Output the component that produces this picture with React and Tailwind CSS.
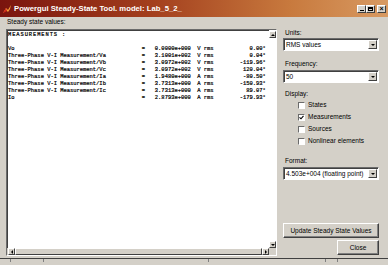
import React from 'react';

const rows = [
  ['Vo', '0.0000e+000', 'V', '0.00'],
  ['Three-Phase V-I Measurement/Va', '3.1001e+002', 'V', '0.04'],
  ['Three-Phase V-I Measurement/Vb', '3.0972e+002', 'V', '-119.96'],
  ['Three-Phase V-I Measurement/Vc', '3.0972e+002', 'V', '120.04'],
  ['Three-Phase V-I Measurement/Ia', '1.9480e+000', 'A', '-80.50'],
  ['Three-Phase V-I Measurement/Ib', '3.7313e+000', 'A', '-150.93'],
  ['Three-Phase V-I Measurement/Ic', '3.7313e+000', 'A', '89.07'],
  ['Io', '2.8793e+000', 'A', '-179.93'],
];

const fmt = ([l, v, u, a]) => l.padEnd(41) + '=   ' + v + '  ' + u + ' rms' + (a + '\u00b0').padStart(16);

function Arrow({ dir = 'down' }) {
  const pts = {
    down: '0,0 4,0 2,2',
    up: '0,2 4,2 2,0',
    left: '2,0 2,4 0,2',
    right: '0,0 0,4 2,2',
  }[dir];
  const vb = dir === 'left' || dir === 'right' ? '0 0 2 4' : '0 0 4 2';
  const cls = dir === 'left' || dir === 'right' ? 'w-[2px] h-[4px]' : 'w-[4px] h-[2px]';
  return (
    <svg viewBox={vb} className={cls}>
      <polygon points={pts} fill="#000" />
    </svg>
  );
}

function SmallBtn({ dir, className = '' }) {
  return (
    <div className={`flex items-center justify-center bg-[#d4d0c8] border border-t-white border-l-white border-r-[#404040] border-b-[#404040] ${className}`}>
      <Arrow dir={dir} />
    </div>
  );
}

function Select({ value }) {
  return (
    <div className="h-[13px] flex bg-white border border-t-[#6b6b6b] border-l-[#6b6b6b] border-r-white border-b-white shadow-[inset_1px_1px_0_#404040]">
      <div className="flex-1 pl-[2px] pt-[1px] text-[6.5px] leading-[10px] text-black truncate">{value}</div>
      <SmallBtn dir="down" className="w-[9px] my-[1px] mr-[1px]" />
    </div>
  );
}

function Check({ label, checked }) {
  return (
    <div className="h-[12px] flex items-center pl-[15px] gap-[3px]">
      <div className="w-[7px] h-[7px] bg-white border border-t-[#6b6b6b] border-l-[#6b6b6b] border-r-white border-b-white flex items-center justify-center">
        {checked && (
          <svg viewBox="0 0 5 5" className="w-[5px] h-[5px]">
            <polyline points="0.5,2.3 2,3.8 4.5,0.8" fill="none" stroke="#000" strokeWidth="1.1" />
          </svg>
        )}
      </div>
      <span className="text-[6.5px] leading-[8px] text-black">{label}</span>
    </div>
  );
}

function Button({ children, className = '' }) {
  return (
    <div className={`h-[15px] flex items-center justify-center bg-[#d4d0c8] border border-t-white border-l-white border-r-[#404040] border-b-[#404040] shadow-[inset_-1px_-1px_0_#808080] text-[6.5px] text-black ${className}`}>
      {children}
    </div>
  );
}

export default function App() {
  return (
    <div className="w-[388px] h-[265px] bg-[#d4d0c8] flex flex-col overflow-hidden font-['Liberation_Sans',Arial,sans-serif]">
      {/* title bar */}
      <div className="h-[17px] flex items-center bg-[linear-gradient(90deg,#7a140e_0%,#a4401e_40%,#c87a3e_75%,#d89a62_100%)] pl-[3px] pr-[2px]">
        <svg viewBox="0 0 8 8" className="w-[8px] h-[8px]">
          <polygon points="0,8 3,3 5,5 8,0 7,4 5,7 3,5" fill="#f6a23a" />
          <polygon points="0,8 3,3 4,6" fill="#d2281c" />
        </svg>
        <span className="ml-[3px] text-white font-bold text-[7.7px] leading-[9px] whitespace-nowrap">Powergui Steady-State Tool. model: Lab_5_2_</span>
        <div className="flex-1" />
        <div className="flex items-center">
          <div className="w-[9px] h-[8px] bg-[#d4d0c8] border border-t-white border-l-white border-r-[#404040] border-b-[#404040] flex items-end justify-center pb-[1px]">
            <div className="w-[4px] h-[1px] bg-black" />
          </div>
          <div className="w-[9px] h-[8px] bg-[#d4d0c8] border border-t-white border-l-white border-r-[#404040] border-b-[#404040] flex items-center justify-center">
            <div className="w-[5px] h-[4px] border border-black border-t-2" />
          </div>
          <div className="ml-[2px] w-[9px] h-[8px] bg-[#d4d0c8] border border-t-white border-l-white border-r-[#404040] border-b-[#404040] flex items-center justify-center text-[7px] leading-[6px] font-bold text-black">
            ×
          </div>
        </div>
      </div>

      {/* body */}
      <div className="flex-1 flex">
        {/* left */}
        <div className="ml-[6px] w-[271px] flex flex-col pb-[2px]">
          <div className="h-[12px] pt-[1px] pl-[1px] text-[6.5px] leading-[8px] text-black">Steady state values:</div>
          <div className="flex-1 flex flex-col border border-t-[#6b6b6b] border-l-[#6b6b6b] border-r-white border-b-white shadow-[inset_1px_1px_0_#404040] bg-white">
            <div className="flex-1 flex min-h-0">
              <div className="flex-1 overflow-hidden pl-[1px] pt-[1px] font-['Liberation_Mono','Courier_New',monospace] text-[5.45px] leading-[7px] text-black [-webkit-text-stroke:0.2px_#000] whitespace-pre">
                <div className="tracking-[0.9px]">MEASUREMENTS :</div>
                <div>{' '}</div>
                {rows.map((r) => (
                  <div key={r[0]}>{fmt(r)}</div>
                ))}
              </div>
              <div className="w-[7px] flex flex-col justify-between pt-[1px] bg-white">
                <SmallBtn dir="up" className="h-[7px]" />
                <SmallBtn dir="down" className="h-[7px]" />
              </div>
            </div>
            <div className="h-[7px] flex bg-[#d4d0c8]">
              <SmallBtn dir="left" className="w-[7px] ml-[1px]" />
              <div className="flex-1 bg-[#d4d0c8] border border-t-white border-l-white border-r-[#404040] border-b-[#404040]" />
              <SmallBtn dir="right" className="w-[7px]" />
              <div className="w-[7px] bg-[#d4d0c8]" />
            </div>
          </div>
        </div>

        {/* right */}
        <div className="ml-[6px] w-[96px] flex flex-col pt-[11px] pb-[3px]">
          <div className="h-[9px] pl-[2px] text-[6.5px] leading-[9px] text-black">Units:</div>
          <div className="mt-[1px]"><Select value="RMS values" /></div>
          <div className="mt-[8px] h-[9px] pl-[2px] text-[6.5px] leading-[9px] text-black">Frequency:</div>
          <div className="mt-[2px]"><Select value="50" /></div>
          <div className="mt-[6px] h-[9px] pl-[2px] text-[6.5px] leading-[9px] text-black">Display:</div>
          <div className="mt-[1px] flex flex-col">
            <Check label="States" />
            <Check label="Measurements" checked />
            <Check label="Sources" />
            <Check label="Nonlinear elements" />
          </div>
          <div className="mt-[9px] h-[9px] pl-[2px] text-[6.5px] leading-[9px] text-black">Format:</div>
          <div className="mt-[2px]"><Select value="4.503e+004 (floating point)" /></div>
          <div className="flex-1" />
          <Button>Update Steady State Values</Button>
          <div className="mt-[2px] flex justify-end">
            <Button className="w-[42px]">Close</Button>
          </div>
        </div>
      </div>

      {/* bottom frame */}
      <div className="h-[7px] border-t border-[#404040] flex">
        <div className="ml-[10px] w-px h-[3px] bg-[#808080]" />
        <div className="ml-[32px] w-px h-[3px] bg-[#808080]" />
        <div className="ml-[164px] w-px h-[3px] bg-[#808080]" />
        <div className="ml-[116px] w-px h-[3px] bg-[#808080]" />
        <div className="ml-[11px] w-px h-[3px] bg-[#808080]" />
      </div>
    </div>
  );
}
